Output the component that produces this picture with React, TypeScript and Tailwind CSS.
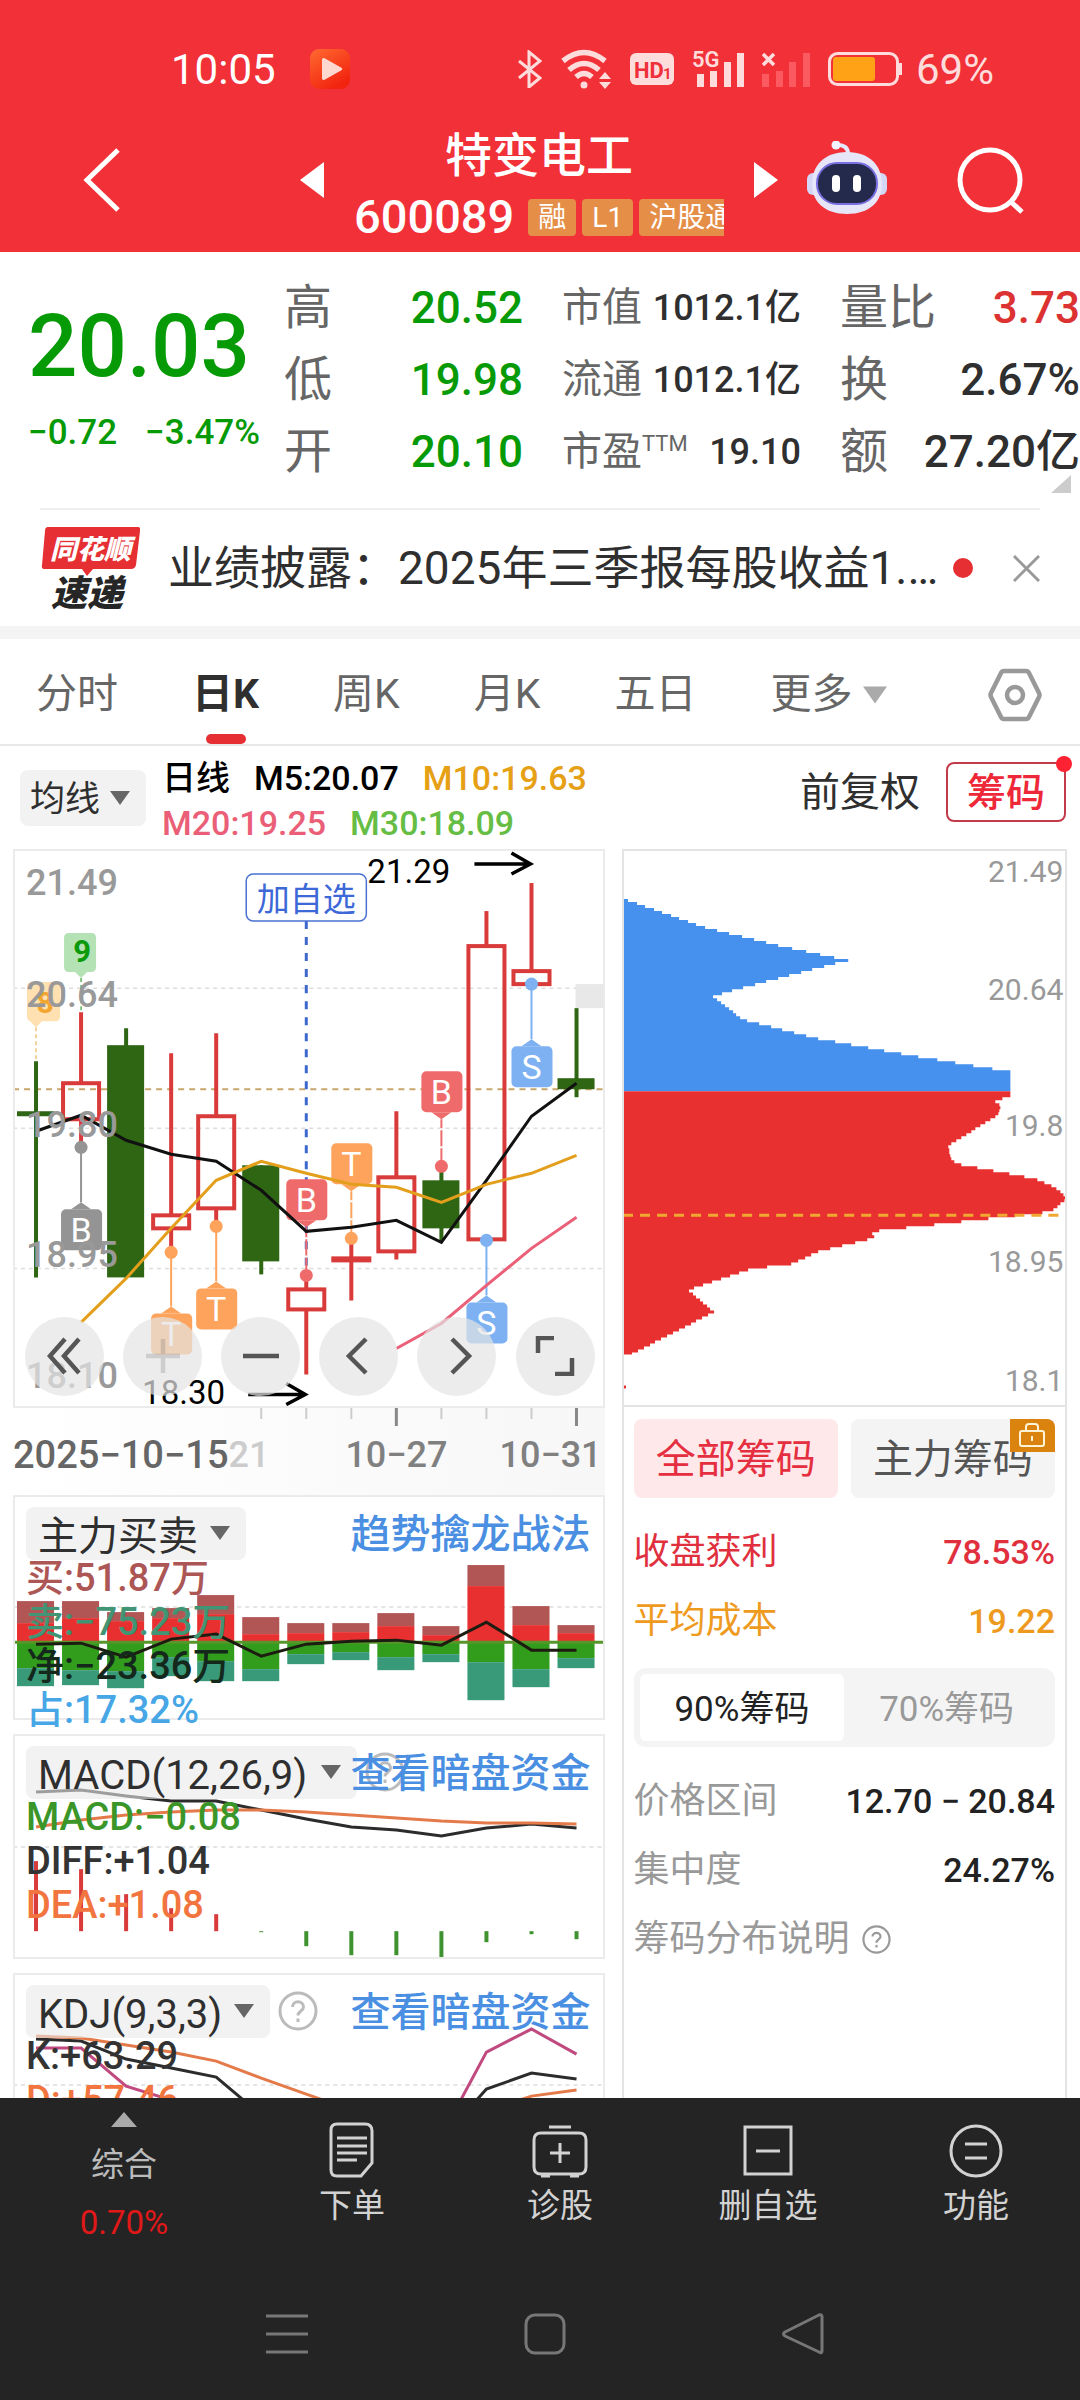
import { ReactNode } from 'react';

const PITCH = 45;
const cx = (i: number) => 23 + PITCH * i;

// y values are top-down units of the chart's viewBox
const candles = [
  { high: 212, top: 262, bottom: 267, low: 428, up: false },
  { high: 163, top: 234, bottom: 270, low: 298, up: true },
  { high: 179, top: 196, bottom: 428, low: 428, up: false },
  { high: 204, top: 366, bottom: 379, low: 403, up: true },
  { high: 184, top: 267, bottom: 359, low: 377, up: true },
  { high: 316, top: 316, bottom: 412, low: 425, up: false },
  { high: 426, top: 440, bottom: 460, low: 525, up: true },
  { high: 389, top: 409, bottom: 411, low: 451, up: true },
  { high: 262, top: 328, bottom: 402, low: 410, up: true },
  { high: 318, top: 331, bottom: 379, low: 392, up: false },
  { high: 62, top: 97, bottom: 390, low: 390, up: true },
  { high: 34, top: 122, bottom: 135, low: 135, up: true },
  { high: 159, top: 229, bottom: 240, low: 248, up: false },
];

const ma5 = [282, 266, 291, 305, 312, 341, 382, 378, 371, 393, 331, 267, 234];
const ma10 = [473, 429, 379, 331, 312, 324, 335, 338, 353, 335, 324, 306];
const ma20 = [499, 474, 436, 399, 368];

const GREY = '#949494';
const RED = '#ef6b6b';
const ORANGE = '#fda35c';
const BLUE = '#7db1f2';

// box: top edge of the label, dot: where the marker touches the candle
const markers = [
  { i: 1, text: 'B', color: GREY, dot: 298, box: 360 },
  { i: 3, text: 'T', color: ORANGE, dot: 403, box: 464 },
  { i: 4, text: 'T', color: ORANGE, dot: 377, box: 439 },
  { i: 6, text: 'B', color: RED, dot: 426, box: 330 },
  { i: 7, text: 'T', color: ORANGE, dot: 389, box: 294 },
  { i: 9, text: 'B', color: RED, dot: 317, box: 222 },
  { i: 10, text: 'S', color: BLUE, dot: 391, box: 453 },
  { i: 11, text: 'S', color: BLUE, dot: 135, box: 197 },
];

const flows = [
  [106, 128, 173, 191],
  [106, 123, 175, 190],
  [117, 126, 176, 193],
  [113, 123, 162, 181],
  [100, 119, 166, 186],
  [122, 139, 174, 186],
  [128, 138, 159, 169],
  [128, 137, 157, 165],
  [118, 131, 162, 175],
  [131, 140, 159, 167],
  [70, 91, 167, 205],
  [111, 130, 174, 192],
  [130, 138, 163, 173],
];
const netFlow = [149, 148, 162, 144, 139, 161, 149, 146, 145, 150, 127, 155, 155];

const macdBars = [127, 135, 160, 174, 180, 198, 212, 221, 221, 224, 208, 200, 205];
const diff = [58, 56, 62, 67, 67, 76, 85, 93, 96, 102, 94, 90, 94];
const dea = [93, 86, 81, 78, 76, 76, 78, 81, 84, 87, 89, 89, 90];

const kLine = [66, 68, 86, 95, 104, 142, 170, 180, 185, 166, 116, 100, 106];
const dLine = [63, 65, 72, 79, 88, 105, 121, 137, 150, 150, 138, 123, 117];
const jLine = [75, 75, 113, 127, 150, 200, 210, 210, 210, 163, 79, 56, 81];

// [y, width] outline of the chip distribution
const chipsAbove: [number, number][] = [
  [50, 5], [77, 82], [95, 155], [110, 225], [113, 212], [141, 105], [146, 90],
  [169, 120], [188, 195], [204, 283], [221, 387], [242, 387],
];
const chipsBelow: [number, number][] = [
  [242, 387], [246, 387], [250, 370], [255, 378], [264, 375], [295, 325], [310, 328], [314, 338],
  [328, 412], [337, 432], [347, 444], [361, 428], [370, 347], [381, 247], [387, 252],
  [401, 195], [413, 168], [418, 128], [439, 65], [461, 91], [505, 5],
];

const line = (ys: number[], start = 0) => ys.map((y, i) => `${cx(i + start)},${y}`).join(' ');

function steps(pts: [number, number][]) {
  const STEP = 3;
  const end = pts[pts.length - 1][0];
  let d = `M0 ${pts[0][0]}`;
  for (let y = pts[0][0]; y < end; y += STEP) {
    const k = Math.max(1, pts.findIndex((p) => p[0] > y));
    const [y0, w0] = pts[k - 1];
    const [y1, w1] = pts[k];
    d += `H${Math.round(w0 + ((w1 - w0) * (y - y0)) / (y1 - y0))}V${Math.min(y + STEP, end)}`;
  }
  return d + 'H0Z';
}

const Down = ({ className = '' }: { className?: string }) => (
  <svg viewBox="0 0 20 14" className={className} fill="currentColor" aria-hidden="true">
    <path d="M0 0h20L10 14z" />
  </svg>
);

const Help = ({ className = '' }: { className?: string }) => (
  <svg viewBox="0 0 40 40" className={className} fill="none" stroke="currentColor" strokeWidth="3" aria-hidden="true">
    <circle cx="20" cy="20" r="18" />
    <path d="M14.5 16c0-7 11-7 11 0 0 4-5.500 4-5.500 8.500" />
    <path d="M20 27.500v3.500" />
  </svg>
);

const Picker = ({ label, name, className }: { label: string; name: string; className: string }) => (
  <div className="relative flex w-fit">
    <select aria-label={name} className={`appearance-none rounded-lg outline-none ${className}`}>
      <option>{label}</option>
    </select>
    <Down className="pointer-events-none absolute right-4 top-1/2 h-[14px] w-5 -translate-y-1/2 text-[#666]" />
  </div>
);

const StatusBar = () => (
  <div className="flex h-[126px] items-center pl-[171px] pr-[86px] pt-3 text-[42px] text-white">
    <span>10:05</span>
    <svg viewBox="0 0 40 40" className="ml-[34px] h-10 w-10">
      <defs>
        <linearGradient id="app" x1="0" y1="0" x2="0.6" y2="1">
          <stop offset="0" stopColor="#ff6a30" />
          <stop offset="1" stopColor="#f2230f" />
        </linearGradient>
      </defs>
      <rect width="40" height="40" rx="9" fill="url(#app)" />
      <path d="M12 11q0-3 3-1.500l16 9q2.500 1.500 0 3l-16 9q-3 1.500-3-1.500z" fill="#ffd9d0" />
    </svg>
    <div className="ml-auto flex items-center gap-[18px] text-[#ffdcdc]">
      <svg viewBox="0 0 24 38" className="h-[38px] w-6" fill="none" stroke="currentColor" strokeWidth="3">
        <path d="M1 11l21 17-11 9V2l11 9L1 28" />
      </svg>
      <svg viewBox="0 0 52 40" className="h-10 w-[52px]" fill="none" stroke="currentColor" strokeWidth="5.500">
        <path d="M3 12q21-17 42 0M9 21q15-13 30 0M16 28q8-7 16 0" />
        <circle cx="24" cy="36" r="3.500" fill="currentColor" stroke="none" />
        <path d="M39 30l6-7 6 7zM39 33l6 7 6-7z" fill="currentColor" stroke="none" />
      </svg>
      <svg viewBox="0 0 44 32" className="h-8 w-11">
        <rect width="44" height="32" rx="6" fill="currentColor" />
        <text x="4" y="25" fontSize="22" fontWeight="700" fill="#f03038">HD</text>
        <text x="33" y="26" fontSize="15" fontWeight="700" fill="#f03038">1</text>
      </svg>
      <svg viewBox="0 0 52 38" className="h-[38px] w-[52px]" fill="currentColor">
        <text x="0" y="17" fontSize="22" fontWeight="600">5G</text>
        <path d="M5 24h7v13H5zM18 21h7v16h-7zM32 12h7v25h-7zM45 3h7v34h-7z" />
      </svg>
      <svg viewBox="0 0 48 38" className="h-[38px] w-12">
        <path d="M1 4l11 11M12 4L1 15" stroke="currentColor" strokeWidth="3.500" />
        <path d="M0 24h7v13H0zM14 21h7v16h-7zM27 12h7v25h-7zM41 3h7v34h-7z" fill="#fa5a60" />
      </svg>
      <svg viewBox="0 0 74 34" className="h-[34px] w-[74px]">
        <rect x="1.500" y="1.500" width="68" height="31" rx="8" fill="none" stroke="currentColor" strokeWidth="3" />
        <rect x="5" y="5" width="42" height="24" rx="3" fill="#ffa216" />
        <path d="M72.500 11v12" stroke="currentColor" strokeWidth="3" />
      </svg>
      <span className="-ml-1">69%</span>
    </div>
  </div>
);

const Robot = () => (
  <svg viewBox="0 0 82 78" className="h-[78px] w-[82px]">
    <path d="M42 13q0-10-13-9" fill="none" stroke="#e6e6fa" strokeWidth="4" />
    <circle cx="30" cy="4" r="4.500" fill="#f1f1ff" />
    <rect x="1" y="32" width="80" height="22" rx="6" fill="#d3d6f4" />
    <path d="M41 11c23 0 35 14 35 32S63 73 41 73 6 61 6 43s12-32 35-32z" fill="#e6e6f8" />
    <rect x="11" y="22" width="60" height="41" rx="20" fill="#232a4c" stroke="#7a6fe0" strokeWidth="2" />
    <rect x="26" y="34" width="8" height="17" rx="4" fill="#fff" />
    <rect x="47" y="34" width="8" height="17" rx="4" fill="#fff" />
  </svg>
);

const TitleBar = () => (
  <div className="flex h-[126px] items-start text-white">
    <div className="flex h-[108px] flex-1 items-center pl-[82px]">
      <button aria-label="返回">
        <svg viewBox="0 0 40 66" className="h-[66px] w-10" fill="none" stroke="currentColor" strokeWidth="5">
          <path d="M36 3L5 33l31 30" />
        </svg>
      </button>
    </div>
    <button aria-label="上一只" className="flex h-[108px] items-center">
      <svg viewBox="0 0 24 36" className="h-9 w-6" fill="currentColor"><path d="M24 0v36L0 18z" /></svg>
    </button>
    <div className="mx-[30px] w-[370px] text-center">
      <h1 className="text-[47px] font-medium leading-[60px]">特变电工</h1>
      <div className="flex items-center gap-1.5 overflow-hidden whitespace-nowrap leading-[62px]">
        <span className="mr-2 text-[47px] font-medium">600089</span>
        {['融', 'L1', '沪股通'].map((tag) => (
          <span key={tag} className="shrink-0 rounded bg-[#e58e48] px-2.5 text-[28px] leading-[37px]">{tag}</span>
        ))}
      </div>
    </div>
    <button aria-label="下一只" className="flex h-[108px] items-center">
      <svg viewBox="0 0 24 36" className="h-9 w-6" fill="currentColor"><path d="M0 0v36l24-18z" /></svg>
    </button>
    <button aria-label="智能助手" className="ml-7 flex h-[108px] items-center"><Robot /></button>
    <button aria-label="搜索" className="ml-[68px] mr-[52px] flex h-[108px] items-center">
      <svg viewBox="0 0 72 72" className="h-[72px] w-[72px]" fill="none" stroke="currentColor" strokeWidth="5">
        <circle cx="34" cy="36" r="30" />
        <path d="M54 57l12 11" />
      </svg>
    </button>
  </div>
);

type QuoteRow = { label: ReactNode; value: string; color?: string };

const QuoteColumn = ({ rows, labelSize, valueSize }: { rows: QuoteRow[]; labelSize: string; valueSize: string }) => (
  <dl>
    {rows.map((row, i) => (
      <div key={i} className="flex justify-between whitespace-nowrap leading-[72px]">
        <dt className={`text-[#666] ${labelSize}`}>{row.label}</dt>
        <dd className={`font-medium ${row.color ?? 'text-[#2f2f2f]'} ${valueSize}`}>{row.value}</dd>
      </div>
    ))}
  </dl>
);

const Quote = () => (
  <section className="relative grid grid-cols-[217fr_239fr_239fr_240fr] gap-x-[39px] py-5 pl-7">
    <div className="min-w-0 whitespace-nowrap pt-2.5 font-medium text-[#069a06]">
      <div className="text-[87px] leading-[128px]">20.03</div>
      <div className="flex gap-7 text-[35px] leading-[46px]">
        <span>−0.72</span>
        <span>−3.47%</span>
      </div>
    </div>
    <QuoteColumn
      labelSize="text-[48px]"
      valueSize="text-[44px]"
      rows={[
        { label: '高', value: '20.52', color: 'text-[#069a06]' },
        { label: '低', value: '19.98', color: 'text-[#069a06]' },
        { label: '开', value: '20.10', color: 'text-[#069a06]' },
      ]}
    />
    <QuoteColumn
      labelSize="text-[40px]"
      valueSize="text-[36px]"
      rows={[
        { label: '市值', value: '1012.1亿' },
        { label: '流通', value: '1012.1亿' },
        { label: <>市盈<span className="inline-block align-top text-[22px] leading-[56px]">TTM</span></>, value: '19.10' },
      ]}
    />
    <QuoteColumn
      labelSize="text-[48px]"
      valueSize="text-[44px]"
      rows={[
        { label: '量比', value: '3.73', color: 'text-[#dc3232]' },
        { label: '换', value: '2.67%' },
        { label: '额', value: '27.20亿' },
      ]}
    />
    <svg viewBox="0 0 20 18" className="absolute bottom-[15px] right-[9px] h-[18px] w-5" fill="#ccc"><path d="M20 0v18H0z" /></svg>
  </section>
);

const News = () => (
  <section className="mx-10 flex h-[118px] items-center border-t-2 border-[#eee]">
    <svg viewBox="0 0 100 84" className="h-[84px] w-[100px] shrink-0 italic" fontWeight="900">
      <path d="M8 1h90q3 0 2 4l-4 34q-1 4-5 4H53l-6 7-5-7H5q-4 0-3-4L5 5q0-4 3-4z" fill="#e52f33" />
      <text x="10" y="33" fontSize="27" fill="#fff">同花顺</text>
      <text x="11" y="80" fontSize="36" fill="#262626">速递</text>
    </svg>
    <a href="#news" className="ml-7 flex-1 overflow-hidden whitespace-nowrap text-[46px] text-[#2f2f2f]">
      业绩披露：2025年三季报每股收益1.…
    </a>
    <span className="ml-4 h-5 w-5 shrink-0 rounded-full bg-[#e52f33]" />
    <button aria-label="关闭" className="ml-10 shrink-0">
      <svg viewBox="0 0 27 27" className="h-[27px] w-[27px]" fill="none" stroke="#999" strokeWidth="3"><path d="M1 1l25 25M26 1L1 26" /></svg>
    </button>
  </section>
);

const tabs = ['分时', '日K', '周K', '月K', '五日'];

const Tabs = () => (
  <nav className="flex h-[107px] items-stretch gap-[74px] border-b-2 border-[#e8e8e8] pl-9 pr-[38px] pt-1.5 text-[41px] text-[#666]">
    {tabs.map((tab) =>
      tab === '日K' ? (
        <button key={tab} aria-current="page" className="relative font-bold text-[#2f2f2f]">
          {tab}
          <span className="absolute bottom-0 left-1/2 h-2.5 w-10 -translate-x-1/2 rounded-full bg-[#e52f33]" />
        </button>
      ) : (
        <button key={tab}>{tab}</button>
      ),
    )}
    <button aria-haspopup="menu" className="flex items-center gap-2.5">
      更多
      <Down className="h-5 w-6 text-[#aaa]" />
    </button>
    <button aria-label="设置" className="ml-auto">
      <svg viewBox="0 0 54 54" className="h-[54px] w-[54px]" fill="none" stroke="#999" strokeWidth="4.500">
        <path d="M16 3h22q2 0 3 2l10 20q1 2 0 4L41 49q-1 2-3 2H16q-2 0-3-2L3 29q-1-2 0-4L13 5q1-2 3-2z" />
        <circle cx="27" cy="27" r="8" />
      </svg>
    </button>
  </nav>
);

const Averages = () => (
  <div className="flex h-[103px] items-center pl-5 pr-[14px]">
    <Picker name="指标" label="均线" className="h-[56px] w-[126px] bg-[#f2f2f2] pl-2.5 pt-1 text-[35px] text-[#2f2f2f]" />
    <div className="ml-4 whitespace-nowrap pt-1.5 text-[34px] font-medium leading-[45px]">
      <div className="flex gap-6">
        <span>日线</span>
        <span>M5:20.07</span>
        <span className="text-[#e6a015]">M10:19.63</span>
      </div>
      <div className="flex gap-6">
        <span className="text-[#ea5f77]">M20:19.25</span>
        <span className="text-[#66bd44]">M30:18.09</span>
      </div>
    </div>
    <div className="ml-auto flex items-center gap-[26px] pb-3">
      <button className="pt-0.5 text-[40px] text-[#2f2f2f]">前复权</button>
      <button className="relative h-[60px] rounded-lg border-2 border-[#c23a4c] px-[19px] text-[39px] font-medium leading-[58px] text-[#ee2838]">
        筹码
        <span className="absolute -right-2 -top-2 h-4 w-4 rounded-full bg-[#ff2233]" />
      </button>
    </div>
  </div>
);

const Marker = ({ i, text, color, dot, box }: (typeof markers)[number]) => {
  const x = cx(i);
  const below = box > dot;
  const edge = below ? box : box + 41;
  const tip = below ? box - 7 : box + 48;
  return (
    <g>
      <path d={`M${x} ${dot}V${tip}`} stroke={color} strokeWidth="2" />
      {!below && <path d={`M${x} ${dot}V${tip}`} stroke="#fff" strokeDasharray="2 16" strokeWidth="3" />}
      <circle cx={x} cy={dot} r="6.500" fill={color} />
      <path d={`M${x - 10} ${edge}L${x} ${tip}L${x + 10} ${edge}z`} fill={color} />
      <rect x={x - 20} y={box} width="41" height="41" rx="5" fill={color} />
      <text x={x} y={box + 33} textAnchor="middle" fontSize="34" fill="#fff">{text}</text>
    </g>
  );
};

const Grid = ({ y }: { y: number }) => <path d={`M0 ${y}H591`} stroke="#ddd" strokeWidth="1.500" strokeDasharray="4 4" />;

const roundButton = 'flex h-[79px] w-[79px] items-center justify-center rounded-full bg-[#e4e4e4]/70 text-[#555]';

const tools = [
  { name: '最早', d: 'M20 3L5 20l15 17M34 3L19 20l15 17', faded: false },
  { name: '放大', d: 'M20 3v34M3 20h34', faded: true },
  { name: '缩小', d: 'M2 20h36', faded: false },
  { name: '左移', d: 'M27 3L10 20l17 17', faded: false },
  { name: '右移', d: 'M15 3l17 17-17 17', faded: false },
  { name: '全屏', d: 'M3 17V2h16M37 22v16H20', faded: false },
];

const KChart = () => (
  <div className="relative border-2 border-[#ebebeb]">
    <svg viewBox="2 2 587 554" className="block w-full" fill="none">
      <Grid y={139} />
      <Grid y={279} />
      <Grid y={419} />
      <rect x="562" y="135" width="29" height="24" fill="#e8e8e8" />
      <path d="M0 240H591" stroke="#c8a66c" strokeWidth="2" strokeDasharray="6 5" />
      <path d="M293 72V426" stroke="#3c68d0" strokeWidth="3" strokeDasharray="8 8" />
      <path d={`M${cx(0)} 178V212`} stroke="#e6a83a" strokeDasharray="4 3" />
      <path d={`M${cx(1)} 129V163`} stroke="#0a8a0a" strokeDasharray="4 3" />
      <path d="M19 133h23q5 0 5 5v29q0 5-5 5h-13l-6 6-6-6q-3-1-3-5v-29q0-5 5-5z" fill="#ffe0b0" />
      <text x="32" y="164" textAnchor="middle" fontSize="30" fontWeight="700" fill="#f3a62f">8</text>
      <path d="M56 84h22q5 0 5 5v29q0 5-5 5h-4l-6 6-6-6h-6q-5 0-5-5v-29q0-5 5-5z" fill="#b4e2b4" />
      <text x="69" y="113" textAnchor="middle" fontSize="31" fontWeight="700" fill="#0a9a0a">9</text>
      {candles.map((c, i) => (
        <g key={i}>
          {c.up ? (
            <>
              <path d={`M${cx(i)} ${c.high}V${c.top}M${cx(i)} ${c.bottom}V${c.low}`} stroke="#d93a3a" strokeWidth="4" />
              <rect x={cx(i) - 18} y={c.top} width="36" height={c.bottom - c.top} stroke="#d93a3a" strokeWidth="4" />
            </>
          ) : (
            <>
              <path d={`M${cx(i)} ${c.high}V${c.low}`} stroke="#2f6614" strokeWidth="4" />
              <rect x={cx(i) - 19} y={c.top} width="37" height={c.bottom - c.top} fill="#2f6614" />
            </>
          )}
        </g>
      ))}
      {markers.map((m) => <Marker key={m.i} {...m} />)}
      <polyline points={line(ma5)} stroke="#111" strokeWidth="3" />
      <polyline points={line(ma10, 1)} stroke="#e39f1c" strokeWidth="3" />
      <polyline points={line(ma20, 8)} stroke="#ea6078" strokeWidth="3" />
      <g fontSize="36" fontWeight="500" fill="#999">
        <text x="13" y="46">21.49</text>
        <text x="13" y="158">20.64</text>
        <text x="13" y="288">19.80</text>
        <text x="13" y="418">18.95</text>
        <text x="13" y="539">18.10</text>
      </g>
      <g fontSize="33" fill="#000">
        <text x="354" y="34">21.29</text>
        <text x="129" y="554">18.30</text>
      </g>
      <path d="M461 15H517M498 4L517 15L498 25M235 545H292M273 534L292 545L273 555" stroke="#000" strokeWidth="3.500" />
      <rect x="233" y="25" width="120" height="47" rx="7" fill="#fff" stroke="#4a72d2" strokeWidth="1.500" />
      <text x="293" y="62" textAnchor="middle" fontSize="33" fill="#3c68d8">加自选</text>
    </svg>
    <div className="absolute bottom-2.5 left-2.5 right-2 flex justify-between">
      {tools.map((t) => (
        <button key={t.name} aria-label={t.name} className={roundButton}>
          <svg viewBox="0 0 40 40" className={t.faded ? 'h-10 w-10 opacity-20' : 'h-10 w-10'} fill="none" stroke="currentColor" strokeWidth="4.500">
            <path d={t.d} />
          </svg>
        </button>
      ))}
    </div>
  </div>
);

const DateAxis = () => (
  <div className="h-[87px] bg-gradient-to-r from-white to-[#f7f7f7]">
    <svg viewBox="0 0 591 18" className="block w-full" fill="none">
      {[5, 6, 7, 9, 10, 11].map((i) => <path key={i} d={`M${cx(i)} 0v11`} stroke="#ccc" strokeWidth="2" />)}
      {[8, 12].map((i) => <path key={i} d={`M${cx(i)} 0v18`} stroke="#888" strokeWidth="3" />)}
    </svg>
    <div className="flex whitespace-nowrap pr-[3px] text-[36px] font-medium leading-[58px] text-[#808080]">
      <span className="text-[38px] text-[#666]">2025−10−15</span>
      <span className="text-[#ccc]">21</span>
      <span className="ml-auto">10−27</span>
      <span className="ml-[52px]">10−31</span>
    </div>
  </div>
);

type Reading = { text: string; color: string };
type IndicatorProps = {
  label: string;
  pickerClass: string;
  link: string;
  help?: boolean;
  readings: Reading[];
  children: ReactNode;
};

// drawing and captions share one grid cell
const Indicator = ({ label, pickerClass, link, help, readings, children }: IndicatorProps) => (
  <section className="grid border-2 border-[#ebebeb]">
    <svg viewBox="2 2 587 221" className="col-start-1 row-start-1 block w-full" fill="none">{children}</svg>
    <div className="col-start-1 row-start-1 h-0 min-h-full whitespace-nowrap pl-[11px] pt-2.5">
      <div className="relative flex h-[53px] items-center">
        <Picker name={label} label={label} className={`h-[53px] bg-[#e9e9e9]/60 pl-3 text-[40px] text-[#2f2f2f] ${pickerClass}`} />
        {help && <Help className="ml-2 h-10 w-10 shrink-0 text-[#bbb]" />}
        <a href="#indicator" className="absolute right-3 pt-1 text-[40px] font-medium text-[#4a8fe2]">{link}</a>
      </div>
      <div className="-mt-1 text-[38px] font-medium leading-[44px]">
        {readings.map((r) => <div key={r.text} className={r.color}>{r.text}</div>)}
      </div>
    </div>
  </section>
);

const Indicators = () => (
  <div className="flex flex-col gap-3.5">
    <Indicator
      label="主力买卖"
      pickerClass="w-[220px]"
      link="趋势擒龙战法"
      readings={[
        { text: '买:51.87万', color: 'text-[#ac5656]' },
        { text: '卖:−75.23万', color: 'text-[#419474]' },
        { text: '净:−23.36万', color: 'text-[#14291c]' },
        { text: '占:17.32%', color: 'text-[#46a6e6]' },
      ]}
    >
      <Grid y={112} />
      {flows.map(([top, buy, sell, bottom], i) => (
        <g key={i}>
          <rect x={cx(i) - 19} y={top} width="37" height={buy - top} fill="#b15555" />
          <rect x={cx(i) - 19} y={buy} width="37" height={147 - buy} fill="#e83030" />
          <rect x={cx(i) - 19} y="147" width="37" height={sell - 147} fill="#329d1c" />
          <rect x={cx(i) - 19} y={sell} width="37" height={bottom - sell} fill="#399a7a" />
        </g>
      ))}
      <path d="M0 147H591" stroke="#57962a" strokeWidth="3" />
      <polyline points={line(netFlow)} stroke="#1c1c10" strokeWidth="3" />
    </Indicator>
    <Indicator
      label="MACD(12,26,9)"
      pickerClass="w-[331px]"
      link="查看暗盘资金"
      help
      readings={[
        { text: 'MACD:−0.08', color: 'text-[#3a9628]' },
        { text: 'DIFF:+1.04', color: 'text-[#333]' },
        { text: 'DEA:+1.08', color: 'text-[#f2743e]' },
      ]}
    >
      <Grid y={113} />
      {macdBars.map((y, i) => (
        <path key={i} d={`M${cx(i)} 197V${y}`} stroke={y < 197 ? '#d93a3a' : '#3f9230'} strokeWidth="4" />
      ))}
      <polyline points={line(diff)} stroke="#2c2c2c" strokeWidth="3" />
      <polyline points={line(dea)} stroke="#e47a4a" strokeWidth="3" />
    </Indicator>
    <Indicator
      label="KDJ(9,3,3)"
      pickerClass="w-[244px]"
      link="查看暗盘资金"
      help
      readings={[
        { text: 'K:+63.29', color: 'text-[#333]' },
        { text: 'D:+57.46', color: 'text-[#f2743e]' },
      ]}
    >
      <Grid y={112} />
      <polyline points={line(jLine)} stroke="#c04a80" strokeWidth="3" />
      <polyline points={line(kLine)} stroke="#2c2c2c" strokeWidth="3" />
      <polyline points={line(dLine)} stroke="#e47a4a" strokeWidth="3" />
    </Indicator>
  </div>
);

const StatRow = ({ label, value, tone, valueTone }: { label: string; value: string; tone: string; valueTone: string }) => (
  <div className="flex justify-between whitespace-nowrap leading-[69px]">
    <dt className={`text-[36px] ${tone}`}>{label}</dt>
    <dd className={`text-[34px] font-medium ${valueTone}`}>{value}</dd>
  </div>
);

const ChipPanel = () => (
  <aside className="border-x-2 border-t-2 border-[#e4e4e4]">
    <svg viewBox="1 2 441 553" className="block w-full" fill="none">
      <path d={steps(chipsAbove)} fill="#4690ee" />
      <path d={steps(chipsBelow)} fill="#e83030" />
      <path d="M0 536h3v3H0z" fill="#e83030" />
      <path d="M0 366H445" stroke="#f0a830" strokeWidth="3" strokeDasharray="10 7" />
      <g fontSize="30" fill="#999" textAnchor="end">
        <text x="440" y="33">21.49</text>
        <text x="440" y="151">20.64</text>
        <text x="440" y="287">19.8</text>
        <text x="440" y="423">18.95</text>
        <text x="440" y="542">18.1</text>
      </g>
    </svg>
    <div className="border-t-2 border-[#e4e4e4] px-2.5 pt-3">
      <div className="grid grid-cols-2 gap-[13px] text-[40px]">
        <button className="h-[79px] rounded-lg bg-[#fee8ea] pt-1 text-[#e52f40]">全部筹码</button>
        <button className="relative h-[79px] overflow-hidden rounded-lg bg-[#f4f4f4] pt-1 text-[#555]">
          主力筹码
          <span className="absolute right-0 top-0 flex h-[33px] w-[45px] items-center justify-center bg-[#da830f]">
            <svg viewBox="0 0 26 26" className="h-[26px] w-[26px]" fill="none" stroke="#fff3d6" strokeWidth="2">
              <rect x="1" y="9" width="24" height="15" rx="2" />
              <path d="M7 9V5q0-3 3-3h6q3 0 3 3v4M13 14v5" />
            </svg>
          </span>
        </button>
      </div>
      <dl className="mt-5">
        <StatRow label="收盘获利" value="78.53%" tone="text-[#e0303e]" valueTone="text-[#e0303e]" />
        <StatRow label="平均成本" value="19.22" tone="text-[#ee9a1e]" valueTone="text-[#ee9a1e]" />
      </dl>
      <div className="mt-3 grid h-[79px] grid-cols-2 rounded-xl bg-[#f4f4f4] p-1.5 text-[35px]">
        <button className="rounded-md bg-white pt-1.5 text-[#222]">90%筹码</button>
        <button className="pt-1.5 text-[#999]">70%筹码</button>
      </div>
      <dl className="mt-5">
        <StatRow label="价格区间" value="12.70 − 20.84" tone="text-[#999]" valueTone="text-[#222]" />
        <StatRow label="集中度" value="24.27%" tone="text-[#999]" valueTone="text-[#222]" />
      </dl>
      <a href="#help" className="flex items-center gap-3 text-[36px] leading-[69px] text-[#999]">
        筹码分布说明
        <Help className="h-[29px] w-[29px]" />
      </a>
    </div>
  </aside>
);

const actions = [
  { name: '下单', d: 'M12 4h28q7 0 7 7v32L36 56H12q-6 0-6-6V10q0-6 6-6zM12 18h30M12 26h30M12 33h30M12 40h20' },
  { name: '诊股', d: 'M8 13h38q7 0 7 7v27q0 7-7 7H8q-7 0-7-7V20q0-7 7-7zM16 7h22M27 23v20M17 33h20M8 56h9M37 56h9' },
  { name: '删自选', d: 'M4 7h46v47H4zM15 31h24' },
  { name: '功能', d: 'M2 31a25 25 0 1 0 50 0a25 25 0 1 0-50 0M16 24h22M16 38h22' },
];

const BottomBar = () => (
  <footer className="shrink-0 bg-[#242424]">
    <nav className="grid h-[172px] grid-cols-[248fr_208fr_208fr_208fr_208fr] text-[33px] text-[#d2d2d2]">
      <button className="flex flex-col items-center pt-3.5">
        <svg viewBox="0 0 26 15" className="h-[15px] w-[26px]" fill="#aaa"><path d="M13 0l13 15H0z" /></svg>
        <span className="mt-3 leading-[52px] text-[#bbb]">综合</span>
        <span className="mt-1.5 leading-[52px] text-[#e01818]">0.70%</span>
      </button>
      {actions.map((a) => (
        <button key={a.name} className="flex flex-col items-center pt-[22px]">
          <svg viewBox="0 0 54 60" className="h-[60px] w-[54px] overflow-visible" fill="none" stroke="currentColor" strokeWidth="3">
            <path d={a.d} />
          </svg>
          <span className="leading-[52px]">{a.name}</span>
        </button>
      ))}
    </nav>
    <div className="grid h-[130px] grid-cols-3 items-center justify-items-center pl-[158px] pr-[148px] text-[#777]">
      <button aria-label="最近任务" className="self-start pt-[43px]">
        <svg viewBox="0 0 42 42" className="h-[42px] w-[42px]" fill="none" stroke="currentColor" strokeWidth="3">
          <path d="M0 3h42M0 21h42M0 39h42" />
        </svg>
      </button>
      <button aria-label="主页" className="self-start pt-[43px]">
        <svg viewBox="0 0 42 42" className="h-[42px] w-[42px]" fill="none" stroke="currentColor" strokeWidth="3">
          <rect x="2" y="2" width="38" height="38" rx="9" />
        </svg>
      </button>
      <button aria-label="后退" className="self-start pt-[43px]">
        <svg viewBox="0 0 42 42" className="h-[42px] w-[42px]" fill="none" stroke="currentColor" strokeWidth="3" strokeLinejoin="round">
          <path d="M40 4v34q0 3-3 1L3 23q-3-2 0-4L37 2q3-1 3 2z" />
        </svg>
      </button>
    </div>
  </footer>
);

export default function App() {
  return (
    <div lang="zh-CN" className="flex h-screen flex-col overflow-hidden bg-white [font-family:Roboto,'Noto_Sans_CJK_SC',sans-serif]">
      <header className="shrink-0 bg-[#f13038]">
        <StatusBar />
        <TitleBar />
      </header>
      <main className="min-h-0 flex-1 overflow-hidden">
        <Quote />
        <News />
        <div className="h-[13px] bg-[#f4f4f4]" />
        <Tabs />
        <Averages />
        <div className="grid grid-cols-[591fr_445fr] gap-[17px] px-[13px]">
          <div className="min-w-0">
            <KChart />
            <DateAxis />
            <Indicators />
          </div>
          <ChipPanel />
        </div>
      </main>
      <BottomBar />
    </div>
  );
}
